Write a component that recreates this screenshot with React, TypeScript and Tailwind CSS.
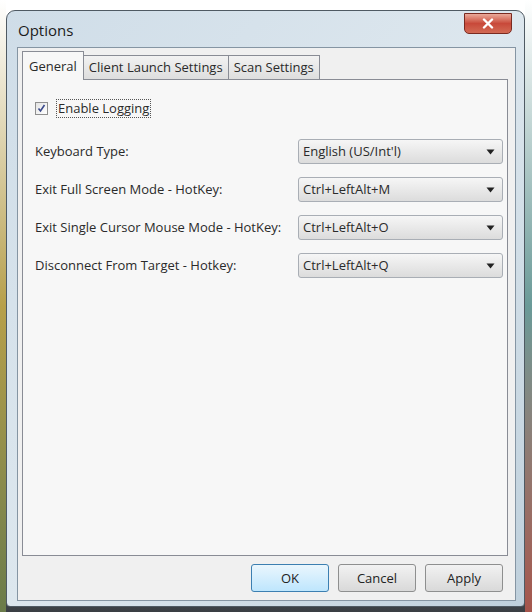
const rows = [
  { label: "Keyboard Type:", value: "English (US/Int'l)" },
  { label: "Exit Full Screen Mode - HotKey:", value: "Ctrl+LeftAlt+M" },
  { label: "Exit Single Cursor Mouse Mode - HotKey:", value: "Ctrl+LeftAlt+O" },
  { label: "Disconnect From Target - Hotkey:", value: "Ctrl+LeftAlt+Q" },
];

function Dropdown({ value }: { value: string }) {
  return (
    <div className="w-[205px] h-[25px] rounded-[3px] border border-[#a9aeb5] bg-gradient-to-b from-[#f6f6f6] to-[#dcdcdc] flex items-center justify-between pl-[4px] pr-[7px]">
      <span className="text-[#2a2a2a]">{value}</span>
      <svg width="9" height="6" viewBox="0 0 9 6">
        <path d="M0.5 0.5 L8.5 0.5 L4.5 5.5 Z" fill="#222" />
      </svg>
    </div>
  );
}

function Button({ label, active }: { label: string; active?: boolean }) {
  return (
    <div
      className={
        active
          ? "w-[78px] h-[28px] rounded-[3px] border border-[#3c7fb1] bg-gradient-to-b from-[#eaf6fd] to-[#bee6fd] flex items-center justify-center text-[#222]"
          : "w-[78px] h-[28px] rounded-[3px] border border-[#8e8f8f] bg-gradient-to-b from-[#f2f2f2] to-[#d9d9d9] flex items-center justify-center text-[#222]"
      }
    >
      {label}
    </div>
  );
}

export default function App() {
  return (
    <div
      className="w-[532px] h-[612px] overflow-hidden bg-gradient-to-b from-white via-white to-[#3a3f44] flex"
      style={{ fontFamily: '"Open Sans", "Noto Sans", sans-serif' }}
    >
      <div className="w-[6px] h-full bg-gradient-to-b from-white via-[#b7a04a] to-[#6a7b4a]" />
      <div className="mt-[10px] w-[519px] h-[597px] rounded-t-[9px] rounded-b-[4px] border border-[#4f5a63] bg-gradient-to-br from-[#cfdde8] via-[#dde7ee] to-[#bfd0dc] flex flex-col pl-[10px] pr-[8px] pb-[5px]">
        <div className="h-[36px] flex items-start justify-between">
          <span className="mt-[8px] ml-[1px] text-[15px] text-[#1b1b1b]">Options</span>
          <div className="mt-[2px] mr-[4px] w-[48px] h-[21px] rounded-b-[5px] border border-[#7a2a20] bg-gradient-to-b from-[#e9a99a] via-[#c8493a] to-[#d26a54] flex items-center justify-center">
            <svg width="12" height="11" viewBox="0 0 12 11">
              <path d="M2 1.5 L10 9.5 M10 1.5 L2 9.5" stroke="white" strokeWidth="2.4" strokeLinecap="round" />
            </svg>
          </div>
        </div>
        <div className="flex-1 bg-[#f0f0f0] border border-[#8595a3] flex flex-col text-[13px] leading-none">
          <div className="flex items-end pl-[4px] pt-[2px] h-[31px]">
            <div className="h-[29px] -mb-px z-10 px-[6px] flex items-center border border-b-0 border-[#898c95] bg-[#f7f7f7] text-[#2a2a2a]">
              General
            </div>
            <div className="h-[24px] px-[5px] flex items-center border border-b-0 border-l-0 border-[#898c95] bg-gradient-to-b from-[#f2f2f2] to-[#dedede] text-[#2a2a2a]">
              Client Launch Settings
            </div>
            <div className="h-[24px] px-[5px] flex items-center border border-b-0 border-l-0 border-[#898c95] bg-gradient-to-b from-[#f2f2f2] to-[#dedede] text-[#2a2a2a]">
              Scan Settings
            </div>
          </div>
          <div className="flex-1 ml-[4px] mr-[7px] border border-[#898c95] bg-[#f7f7f7] pl-[12px] pt-[19px]">
            <div className="flex items-center gap-[8px]">
              <div className="w-[13px] h-[13px] border border-[#8f8f8f] bg-gradient-to-br from-[#e4e4e4] to-white flex items-center justify-center">
                <svg width="9" height="9" viewBox="0 0 9 9">
                  <path d="M1.5 4.5 L3.5 7 L7.5 1" stroke="#3b4a8c" strokeWidth="1.6" fill="none" />
                </svg>
              </div>
              <span className="px-[1px] py-[2px] border border-dotted border-[#555] text-[#2a2a2a]">Enable Logging</span>
            </div>
            <div className="mt-[21px] flex flex-col gap-[13px]">
              {rows.map((r) => (
                <div key={r.label} className="flex items-center">
                  <span className="w-[263px] text-[#2a2a2a]">{r.label}</span>
                  <Dropdown value={r.value} />
                </div>
              ))}
            </div>
          </div>
          <div className="h-[44px] flex items-center justify-end gap-[9px] pr-[12px]">
            <Button label="OK" active />
            <Button label="Cancel" />
            <Button label="Apply" />
          </div>
        </div>
      </div>
      <div className="flex-1 h-full bg-gradient-to-b from-white via-[#6a9a98] to-[#a5554c]" />
    </div>
  );
}
